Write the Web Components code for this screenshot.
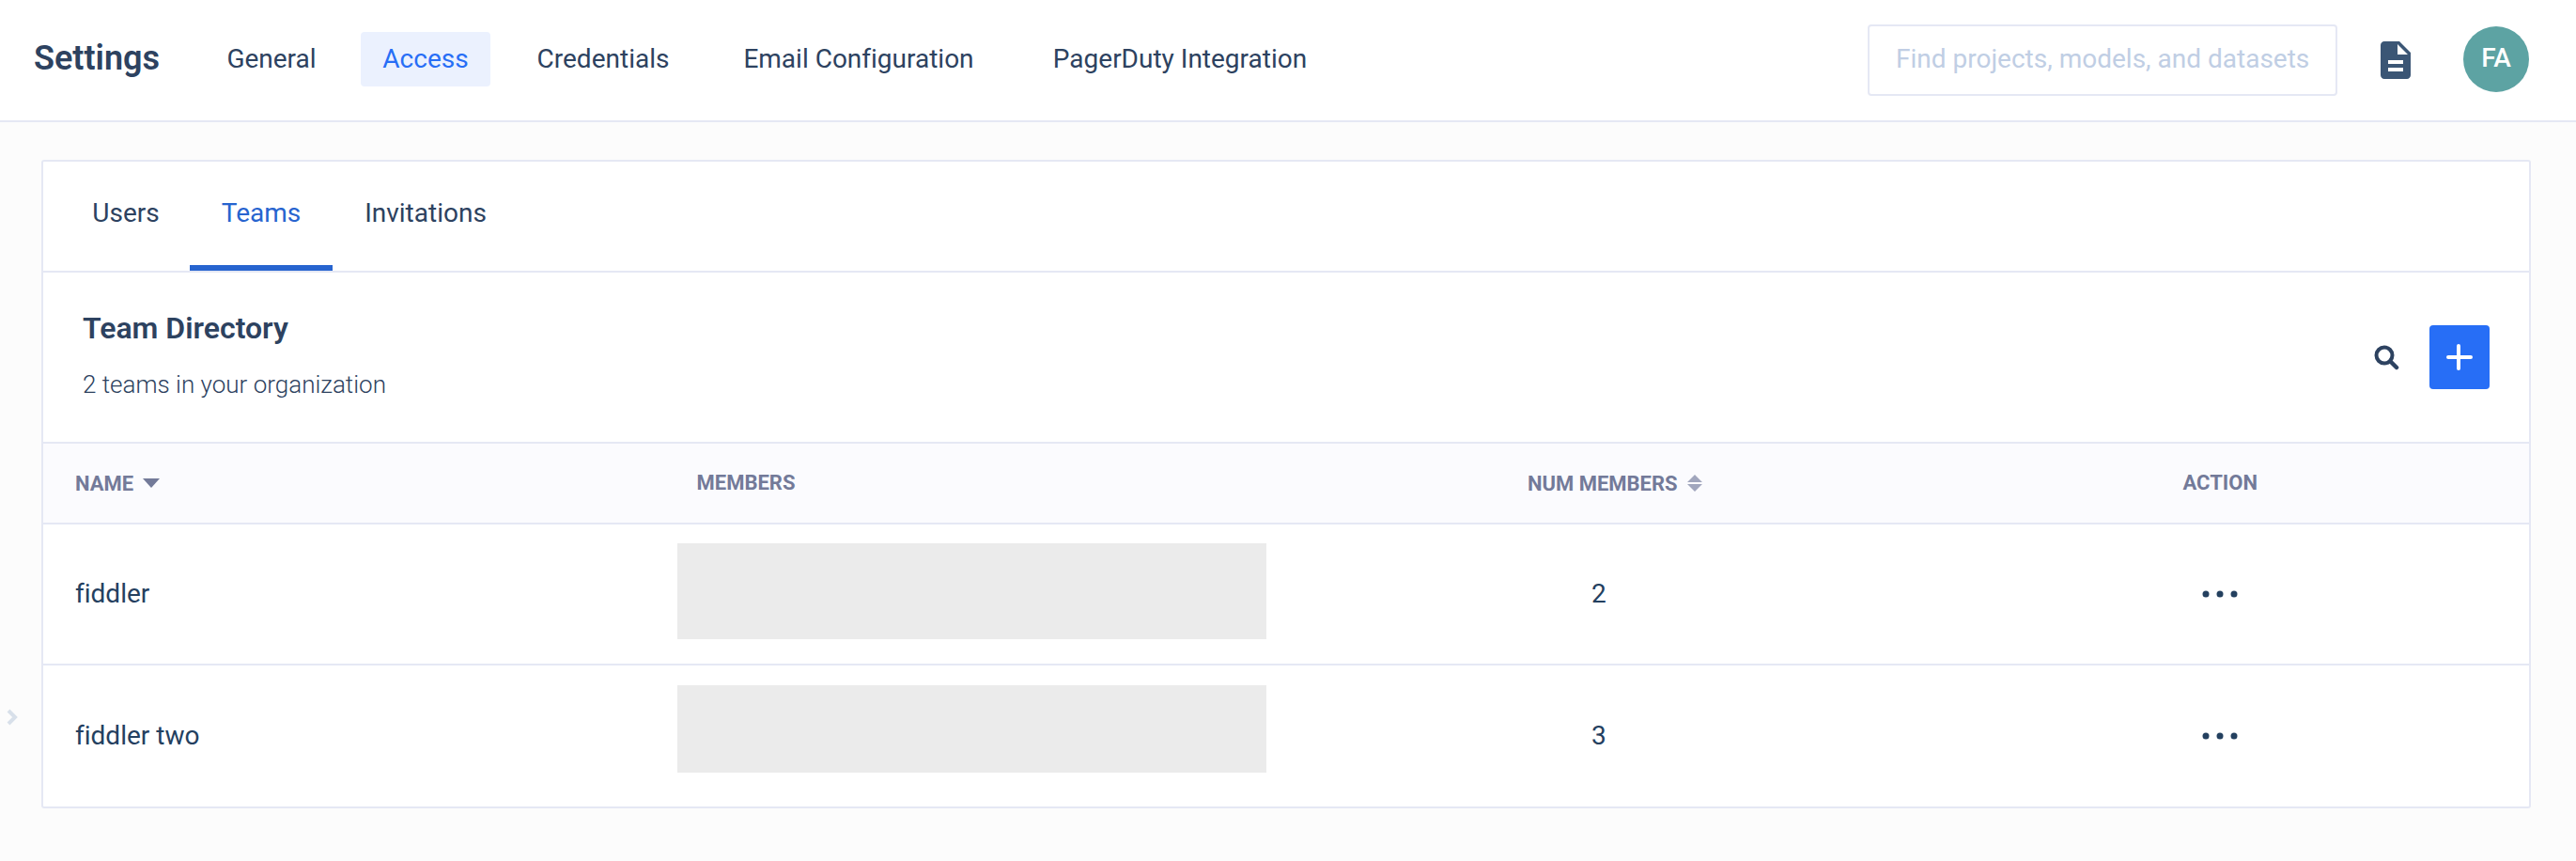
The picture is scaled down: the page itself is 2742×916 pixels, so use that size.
<!DOCTYPE html>
<html lang="en">
<head>
<meta charset="utf-8">
<meta name="viewport" content="width=device-width, initial-scale=1">
<title>Settings – Access – Teams</title>
<style>
  :root {
    --ink: #2d4260;
    --ink-strong: #24405f;
    --line: #e5e8f4;
    --accent: #276ef6;
    --accent-deep: #2764cf;
    --muted: #737a99;
  }
  body {
    margin: 0;
    background: #fcfcfc;
    color: var(--ink);
    font: 400 28px/36px Roboto, "Liberation Sans", sans-serif;
    font-variant-ligatures: none;
  }
</style>
</head>
<body>
<settings-page>
  <app-header slot="header" heading="Settings">
    <nav-link>General</nav-link>
    <nav-link active>Access</nav-link>
    <nav-link>Credentials</nav-link>
    <nav-link>Email Configuration</nav-link>
    <nav-link>PagerDuty Integration</nav-link>
    <search-box slot="tools" label="Find projects, models, and datasets"></search-box>
    <docs-button slot="tools"></docs-button>
    <user-avatar slot="tools">FA</user-avatar>
  </app-header>
  <drawer-toggle slot="gutter"></drawer-toggle>
  <panel-card>
    <tab-bar>
      <tab-item>Users</tab-item>
      <tab-item active>Teams</tab-item>
      <tab-item>Invitations</tab-item>
    </tab-bar>
    <directory-header>
      <span slot="title">Team Directory</span>
      <span slot="summary">2 teams in your organization</span>
    </directory-header>
    <team-table></team-table>
  </panel-card>
</settings-page>

<script>
const define = (name, html, setup) => {
  const template = document.createElement('template');
  template.innerHTML = html;
  customElements.define(name, class extends HTMLElement {
    constructor() {
      super();
      this.attachShadow({ mode: 'open' }).append(template.content.cloneNode(true));
    }
    connectedCallback() {
      if (setup) setup(this, this.shadowRoot);
    }
  });
};

define('settings-page', `
  <style>
    :host { display: flex; flex-direction: column; min-height: 100vh; }
    .body { flex: 1; display: grid; grid-template-columns: 44px minmax(0, 1fr); }
    aside { display: flex; align-items: flex-end; padding: 0 0 143px 6px; }
    main { padding: 40px 48px 48px 0; }
  </style>
  <slot name="header"></slot>
  <div class="body">
    <aside><slot name="gutter"></slot></aside>
    <main><slot></slot></main>
  </div>`);

define('app-header', `
  <style>
    :host { display: block; background: #fff; border-bottom: 2px solid var(--line); }
    header { display: flex; align-items: center; height: 128px; padding: 0 50px 0 36px; }
    h1 { flex: none; width: 182px; margin: 0; padding-bottom: 4px; font-size: 36px; line-height: 44px; font-weight: 600; }
    nav { display: grid; grid-template-columns: 142px 138px 192px 304px 332px; gap: 24px; padding-bottom: 2px; }
    .tools { display: flex; align-items: center; margin-left: auto; gap: 38px; }
  </style>
  <header>
    <h1></h1>
    <nav aria-label="Settings sections"><slot></slot></nav>
    <div class="tools"><slot name="tools"></slot></div>
  </header>`,
  (host, root) => { root.querySelector('h1').textContent = host.getAttribute('heading'); });

define('nav-link', `
  <style>
    :host { display: block; }
    a { display: block; padding: 11px 0; border-radius: 4px; text-align: center; line-height: 36px; color: var(--ink); text-decoration: none; white-space: nowrap; }
    :host([active]) a { background: #ebf1fe; color: var(--accent); }
  </style>
  <a href="#"><slot></slot></a>`,
  (host, root) => { if (host.hasAttribute('active')) root.querySelector('a').setAttribute('aria-current', 'page'); });

define('search-box', `
  <style>
    :host { display: block; width: 500px; }
    input { display: block; box-sizing: border-box; width: 100%; height: 76px; margin: 0; padding: 0 16px 4px 28px; border: 2px solid var(--line); border-radius: 4px; background: #fff; font: inherit; color: var(--ink); outline: none; }
    input::placeholder { color: #c0cee4; opacity: 1; }
  </style>
  <input type="text" role="searchbox">`,
  (host, root) => {
    const input = root.querySelector('input');
    input.placeholder = host.getAttribute('label');
    input.setAttribute('aria-label', host.getAttribute('label'));
  });

define('docs-button', `
  <style>
    :host { display: block; }
    button { display: block; padding: 0; border: 0; background: none; }
    svg { display: block; }
  </style>
  <button type="button" aria-label="Documentation">
    <svg width="48" height="48" viewBox="0 0 24 24" fill="#3b5675"><path d="M14 2H6c-1.1 0-2 .9-2 2v16c0 1.1.9 2 2 2h12c1.1 0 2-.9 2-2V8l-6-6zm2 16H8v-2h8v2zm0-4H8v-2h8v2zm-3-5V3.500L18.500 9H13z"/></svg>
  </button>`);

define('user-avatar', `
  <style>
    :host { display: block; padding: 0 0 2px 10px; }
    button { display: block; width: 70px; height: 70px; padding: 0 0 2px; border: 0; border-radius: 50%; background: #5da3a3; color: #fff; font: inherit; font-weight: 500; text-align: center; }
  </style>
  <button type="button"><slot></slot></button>`);

define('drawer-toggle', `
  <style>
    :host { display: block; }
    button { display: block; padding: 0; border: 0; background: none; }
    svg { display: block; }
  </style>
  <button type="button" aria-label="Open drawer">
    <svg width="14" height="20" viewBox="0 0 14 20" fill="none" stroke="#d8e0ea" stroke-width="4"><path d="M3 3l7 7-7 7"/></svg>
  </button>`);

define('panel-card', `
  <style>
    :host { display: block; background: #fff; border: 2px solid var(--line); border-radius: 3px; }
  </style>
  <slot></slot>`);

define('tab-bar', `
  <style>
    :host { display: grid; grid-template-columns: 136px 152px 198px; height: 116px; padding-left: 20px; border-bottom: 2px solid var(--line); }
  </style>
  <slot></slot>`);

define('tab-item', `
  <style>
    :host { display: block; }
    button { display: block; box-sizing: border-box; width: 100%; height: 100%; padding: 0; border: 0; border-bottom: 6px solid transparent; background: none; font: inherit; color: var(--ink); text-align: center; white-space: nowrap; }
    :host([active]) button { color: var(--accent-deep); border-bottom-color: var(--accent-deep); }
  </style>
  <button type="button"><slot></slot></button>`,
  (host, root) => root.querySelector('button').setAttribute('aria-pressed', host.hasAttribute('active')));

define('directory-header', `
  <style>
    :host { display: flex; align-items: center; justify-content: space-between; padding: 36px 42px; border-bottom: 2px solid var(--line); }
    h2 { margin: 0 0 20px; padding-top: 1px; font-size: 32px; line-height: 44px; font-weight: 600; }
    p { margin: 0; padding-bottom: 7px; font-size: 26px; line-height: 36px; font-weight: 300; }
    .actions { display: flex; align-items: center; gap: 32px; }
    button { display: flex; align-items: center; justify-content: center; padding: 0; border: 0; background: none; }
    .add { width: 64px; height: 68px; border-radius: 4px; background: var(--accent); }
  </style>
  <div>
    <h2><slot name="title"></slot></h2>
    <p><slot name="summary"></slot></p>
  </div>
  <div class="actions">
    <button type="button" aria-label="Search teams">
      <svg width="28" height="28" viewBox="0 0 28 28" fill="none" stroke="#2d4260"><circle cx="12" cy="12" r="8.500" stroke-width="4"/><path d="M18.500 18.500L25 25" stroke-width="4.500" stroke-linecap="round"/></svg>
    </button>
    <button type="button" class="add" aria-label="Add team">
      <svg width="28" height="28" viewBox="0 0 28 28" fill="none" stroke="#fff" stroke-width="4" stroke-linecap="round"><path d="M13 2v24M2 14h24"/></svg>
    </button>
  </div>`);

define('team-table', `
  <style>
    :host { display: block; }
    table { width: 100%; table-layout: fixed; border-collapse: separate; border-spacing: 0; }
    th { height: 84px; padding: 0 30px 0 34px; background: #fbfbfe; border-bottom: 2px solid var(--line); color: var(--muted); font-size: 22px; line-height: 28px; font-weight: 700; text-align: left; }
    th button { display: inline-flex; align-items: center; gap: 10px; padding: 0; border: 0; background: none; color: inherit; font: inherit; vertical-align: middle; }
    th svg { margin-bottom: 2px; }
    .num, .act { text-align: center; }
    th.num { padding-left: 68px; }
    td { height: 148px; padding: 0 30px 0 34px; border-bottom: 2px solid var(--line); color: var(--ink-strong); }
    tr:last-child td { height: 150px; border-bottom: 0; }
    td.who { padding: 0 20px 0 13px; }
    .mask { display: block; width: 100%; max-width: 627px; height: 102px; margin-bottom: 6px; background: #ebebeb; }
    tr:last-child .mask { height: 93px; margin-bottom: 15px; }
    td button { display: block; margin: 0 auto; padding: 0; border: 0; background: none; }
    svg { display: block; }
  </style>
  <table>
    <thead>
      <tr>
        <th scope="col" aria-sort="descending"><button type="button">NAME <svg width="18" height="10" viewBox="0 0 18 10" fill="#737a99"><path d="M0 0h18L9 10z"/></svg></button></th>
        <th scope="col">MEMBERS</th>
        <th scope="col" class="num"><button type="button">NUM MEMBERS <svg width="16" height="18" viewBox="0 0 16 18" fill="#a1a6bd"><path d="M8 0l8 8H0zM0 10h16l-8 8z"/></svg></button></th>
        <th scope="col" class="act">ACTION</th>
      </tr>
    </thead>
    <tbody></tbody>
  </table>`,
  (host, root) => {
    const teams = [{ name: 'fiddler', count: 2 }, { name: 'fiddler two', count: 3 }];
    root.querySelector('tbody').innerHTML = teams.map(team => `
      <tr>
        <td>${team.name}</td>
        <td class="who"><span class="mask"></span></td>
        <td class="num">${team.count}</td>
        <td class="act"><button type="button" aria-label="Actions for ${team.name}">
          <svg width="38" height="8" viewBox="0 0 38 8" fill="#24405f"><circle cx="4" cy="4" r="3.500"/><circle cx="19" cy="4" r="3.500"/><circle cx="34" cy="4" r="3.500"/></svg>
        </button></td>
      </tr>`).join('');
  });
</script>
</body>
</html>
